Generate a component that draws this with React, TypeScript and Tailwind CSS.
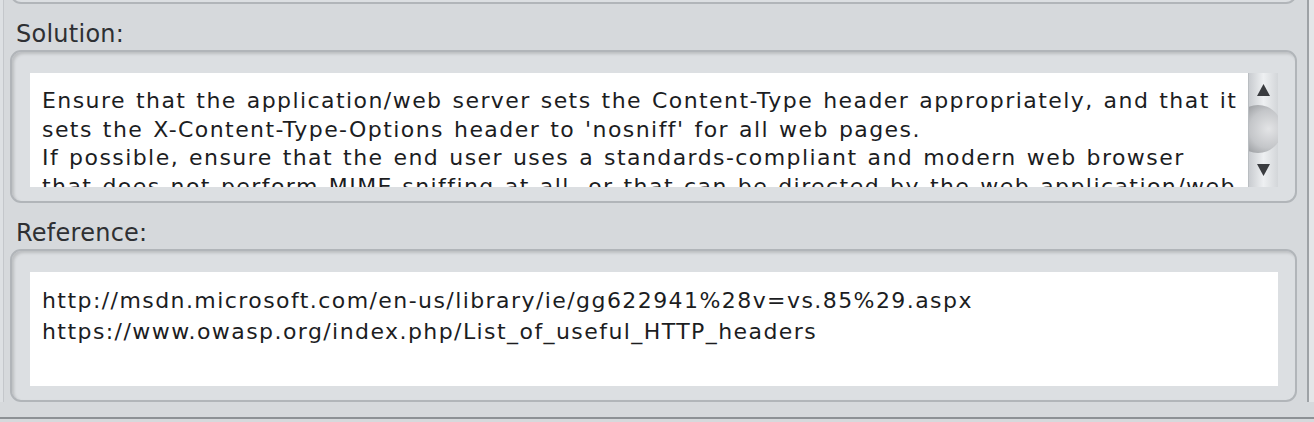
import React from 'react';

const solutionText =
  "Ensure that the application/web server sets the Content-Type header appropriately, and that it sets the X-Content-Type-Options header to 'nosniff' for all web pages.\nIf possible, ensure that the end user uses a standards-compliant and modern web browser that does not perform MIME-sniffing at all, or that can be directed by the web application/web server to not perform MIME-sniffing.";

const referenceText =
  'http://msdn.microsoft.com/en-us/library/ie/gg622941%28v=vs.85%29.aspx\nhttps://www.owasp.org/index.php/List_of_useful_HTTP_headers';

function ScrollBar() {
  return (
    <div className="w-[30px] shrink-0 flex flex-col bg-gradient-to-r from-[#c9ccd0] via-[#eef0f2] to-[#d3d6d9] border-l border-[#b9bdc1]">
      <div className="h-[32px] shrink-0 flex items-start justify-center pt-[11px]">
        <svg width="13" height="12" viewBox="0 0 13 12">
          <path d="M6.5 0 L13 12 L0 12 Z" fill="#3a3c40" />
        </svg>
      </div>
      <div className="h-[48px] shrink-0 relative overflow-hidden">
        <div className="absolute left-[-15px] top-0 w-[48px] h-[48px] rounded-full bg-[radial-gradient(circle_at_72%_50%,#e3e4e6_0%,#c4c6c9_45%,#74777b_100%)]" />
      </div>
      <div className="flex-1 flex items-end justify-center pb-[11px]">
        <svg width="13" height="12" viewBox="0 0 13 12">
          <path d="M0 0 L13 0 L6.5 12 Z" fill="#3a3c40" />
        </svg>
      </div>
    </div>
  );
}

function Section({ label, text, scroll }: { label: string; text: string; scroll?: boolean }) {
  return (
    <div className="flex flex-col">
      <div className="pl-[12px] h-[46px] flex items-end pb-[2px] text-[24px] leading-[28px] tracking-[0.25px] text-[#2e3033]">{label}</div>
      <div className="ml-[6px] mr-[10px] h-[153px] rounded-[11px] border-2 border-[#b1b5b9] bg-[#dcdfe2] shadow-[inset_2px_2px_3px_rgba(0,0,0,0.15)] pl-[18px] pr-[17px] pt-[21px] pb-[14px] flex">
        <div className="flex-1 flex bg-white overflow-hidden">
          <div
            className={
              scroll
                ? 'flex-1 overflow-hidden pl-[12px] pr-[7px] pt-[14px] text-[22px] leading-[28.5px] tracking-[1.43px] [word-spacing:1.6px] text-[#1c1d1f] whitespace-pre-wrap'
                : 'flex-1 overflow-hidden pl-[12px] pr-[7px] pt-[13px] text-[22px] leading-[31px] tracking-[1.43px] [word-spacing:1.6px] text-[#1c1d1f] whitespace-pre-wrap'
            }
          >
            {text}
          </div>
          {scroll && <ScrollBar />}
        </div>
      </div>
    </div>
  );
}

export default function App() {
  return (
    <div
      className="relative w-[1314px] h-[422px] overflow-hidden bg-[#d6d9dc]"
      style={{ fontFamily: '"DejaVu Sans", Verdana, sans-serif' }}
    >
      <div className="flex">
        <div className="w-[4px] shrink-0 border-r border-[#c4c7cb] bg-[#dde0e3]" />
        <div className="flex-1 flex flex-col">
          <div className="ml-[6px] mr-[10px] -mt-[10px] h-[14px] rounded-b-[11px] border-2 border-t-0 border-[#b1b5b9] bg-[#dcdfe2]" />
          <Section label="Solution:" text={solutionText} scroll />
          <Section label="Reference:" text={referenceText} />
        </div>
        <div className="w-[7px] shrink-0 border-l-2 border-[#9ea2a6] bg-[#e4e6e8]" />
      </div>
      <div className="absolute left-0 right-0 bottom-[3px] h-[2px] bg-[#8d9195]" />
    </div>
  );
}
